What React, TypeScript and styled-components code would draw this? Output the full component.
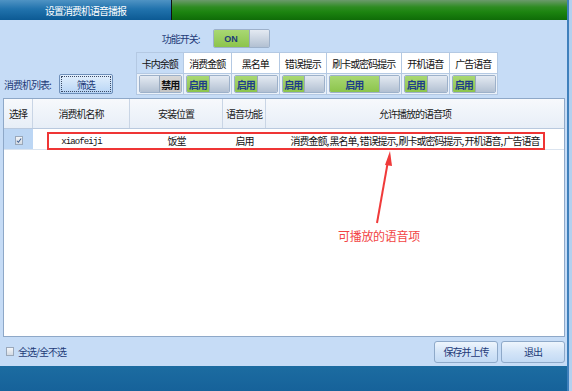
import React from "react";
import styled, { createGlobalStyle } from "styled-components";

const GlobalStyle = createGlobalStyle`
  html, body { margin: 0; padding: 0; }
  body {
    font-family: "Noto Sans CJK SC", "Noto Sans", sans-serif;
    font-size: 10px;
    letter-spacing: -1px;
    background: #ffffff;
  }
  * { box-sizing: border-box; }
`;

const Window = styled.div`
  width: 572px;
  height: 391px;
  display: flex;
  overflow: hidden;
`;

const Main = styled.div`
  width: 567px;
  display: flex;
  flex-direction: column;
  background: #c6dcf6;
`;

const EdgeStrip = styled.div`
  width: 5px;
  background: #b4d0ef;
  border-left: 2px solid #3f80bc;
`;

const TitleBar = styled.div`
  height: 20px;
  display: flex;
`;

const TitleLeft = styled.div`
  width: 172px;
  background: linear-gradient(#4f93c4 0%, #2173ad 45%, #0c5a94 100%);
  color: #ffffff;
  font-size: 10px;
  display: flex;
  align-items: center;
  justify-content: center;
  border-right: 1px solid #101010;
`;

const TitleRight = styled.div`
  flex: 1;
  background: linear-gradient(#6c9a6c 0%, #2f8c22 35%, #1c8410 60%, #0f6c08 100%);
`;

const ControlArea = styled.div`
  height: 78px;
  display: flex;
  align-items: flex-end;
  padding: 9px 0 3px 4px;
`;

const FilterGroup = styled.div`
  display: flex;
  align-items: center;
  gap: 8px;
  margin-bottom: 1px;
`;

const NavyLabel = styled.span`
  color: #1e3a78;
  font-size: 10px;
  white-space: nowrap;
`;

const FilterButton = styled.button`
  width: 54px;
  height: 20px;
  padding: 1px;
  border: 1px solid #6f90ba;
  border-radius: 2px;
  background: linear-gradient(#e2effd, #b8d5f5);
  font-family: inherit;
  font-size: 10px;
  letter-spacing: -1px;
  color: #1e3a78;
  display: flex;
`;

const FocusRing = styled.span`
  flex: 1;
  border: 1px dotted #3a4a66;
  display: flex;
  align-items: center;
  justify-content: center;
`;

const VoicePanel = styled.div`
  margin-left: 23px;
  display: flex;
  flex-direction: column;
  gap: 4px;
`;

const FuncRow = styled.div`
  height: 19px;
  display: flex;
  align-items: center;
  gap: 13px;
  margin-left: 26px;
`;

const Switch = styled.div<{ $w: number }>`
  width: ${(p) => p.$w}px;
  height: 100%;
  display: flex;
  border: 1px solid #9db1ca;
  border-radius: 2px;
  overflow: hidden;
`;

const SwitchLabel = styled.span<{ $on: boolean }>`
  flex: 1;
  display: flex;
  align-items: center;
  justify-content: center;
  font-weight: 700;
  font-size: 10px;
  color: ${(p) => (p.$on ? "#1d3c8a" : "#111111")};
  background: ${(p) =>
    p.$on
      ? "linear-gradient(#a9d873, #8cc44c)"
      : "linear-gradient(#d8d8d8, #c4c4c4)"};
`;

const OnText = styled.span`
  font-family: "Liberation Sans", Arial, sans-serif;
  font-weight: 700;
  font-size: 9px;
  letter-spacing: 0;
  color: #1d3c7a;
`;

const Knob = styled.span<{ $side: "left" | "right" }>`
  width: 20px;
  background: linear-gradient(#e4eaf2, #b2c0d2);
  ${(p) =>
    p.$side === "right"
      ? "border-left: 1px solid #98a9be;"
      : "border-right: 1px solid #98a9be;"}
`;

const VoiceGrid = styled.div`
  display: grid;
  grid-template-columns: 46px 47px 47px 46px 74px 47px 47px;
  grid-template-rows: 20px 20px;
  gap: 1px;
  padding: 1px;
  background: #b4c9e3;
  width: 362px;
`;

const VoiceHead = styled.div<{ $selected?: boolean }>`
  background: ${(p) => (p.$selected ? "#c6dcf6" : "#ffffff")};
  color: #111111;
  font-size: 10px;
  display: flex;
  align-items: center;
  justify-content: center;
  white-space: nowrap;
`;

const VoiceCell = styled.div`
  background: #eaf1f9;
  padding: 1px 1px 1px 2px;
  display: flex;
`;

const Table = styled.div`
  height: 239px;
  margin: 0 2px 0 3px;
  border: 1px solid #8ea8c8;
  background: #ffffff;
  position: relative;
`;

const Row = styled.div<{ $head?: boolean }>`
  display: grid;
  grid-template-columns: 29px 97px 93px 43px 1fr;
  height: ${(p) => (p.$head ? 30 : 21)}px;
  border-bottom: 1px solid ${(p) => (p.$head ? "#b9c9de" : "#dbe4ef")};
  background: ${(p) => (p.$head ? "linear-gradient(#f7f9fc, #e7eef7)" : "#ffffff")};
`;

const HeadCell = styled.div`
  border-right: 1px solid #c9d5e5;
  display: flex;
  align-items: center;
  justify-content: center;
  color: #1a1a1a;
  font-size: 10px;
  white-space: nowrap;
  &:last-child { border-right: none; }
`;

const Cell = styled.div<{ $select?: boolean; $mono?: boolean }>`
  display: flex;
  align-items: center;
  justify-content: center;
  padding-top: ${(p) => (p.$mono ? "5px" : "2px")};
  background: ${(p) => (p.$select ? "#bcd6f4" : "transparent")};
  color: #111111;
  white-space: nowrap;
  font-size: ${(p) => (p.$mono ? "9px" : "10px")};
  letter-spacing: ${(p) => (p.$mono ? "-0.9px" : "-1px")};
  font-family: ${(p) =>
    p.$mono ? '"Liberation Mono", "DejaVu Sans Mono", monospace' : "inherit"};
`;

const Highlight = styled.div`
  position: absolute;
  left: 43px;
  top: 33px;
  width: 498px;
  height: 18px;
  border: 2px solid #ef3535;
  pointer-events: none;
`;

const ArrowLayer = styled.svg`
  position: absolute;
  left: 0;
  top: 0;
  pointer-events: none;
`;

const NoteText = styled.div`
  position: absolute;
  left: 334px;
  top: 129px;
  color: #f24444;
  font-size: 12px;
  letter-spacing: -0.3px;
  line-height: 16px;
  white-space: nowrap;
`;

const BottomArea = styled.div`
  height: 29px;
  display: flex;
  align-items: center;
  justify-content: space-between;
  padding: 0 2px 0 6px;
`;

const SelectAll = styled.label`
  display: flex;
  align-items: center;
  gap: 4px;
  color: #1e3a78;
  font-size: 10px;
`;

const BoxIcon = styled.span`
  width: 8px;
  height: 9px;
  border: 1px solid #9aa8ba;
  background: linear-gradient(#f4f6f9, #d3dae3);
  display: inline-flex;
  align-items: center;
  justify-content: center;
`;

const ButtonRow = styled.div`
  display: flex;
  gap: 3px;
`;

const ActionButton = styled.button`
  width: 64px;
  height: 22px;
  border: 1px solid #8ea9c9;
  border-radius: 3px;
  background: linear-gradient(#eef5fd, #d4e5f8 50%, #c3daf4);
  color: #1e3a78;
  font-family: inherit;
  font-size: 10px;
  letter-spacing: -1px;
  padding: 0;
`;

const BottomBar = styled.div`
  height: 25px;
  background: linear-gradient(#1c6ca1, #16629a);
`;

const voiceItems = [
  { name: "卡内余额", on: false, w: 46 },
  { name: "消费金额", on: true, w: 47 },
  { name: "黑名单", on: true, w: 47 },
  { name: "错误提示", on: true, w: 46 },
  { name: "刷卡或密码提示", on: true, w: 74 },
  { name: "开机语音", on: true, w: 47 },
  { name: "广告语音", on: true, w: 47 },
];

const Check = () => (
  <svg width="7" height="7" viewBox="0 0 7 7">
    <path d="M1 3.8 L2.8 5.6 L6 1.2" stroke="#3a5b8f" strokeWidth="1.2" fill="none" />
  </svg>
);

export default function App() {
  return (
    <>
      <GlobalStyle />
      <Window>
        <Main>
          <TitleBar>
            <TitleLeft>设置消费机语音播报</TitleLeft>
            <TitleRight />
          </TitleBar>

          <ControlArea>
            <FilterGroup>
              <NavyLabel>消费机列表:</NavyLabel>
              <FilterButton>
                <FocusRing>筛选</FocusRing>
              </FilterButton>
            </FilterGroup>
            <VoicePanel>
              <FuncRow>
                <NavyLabel>功能开关:</NavyLabel>
                <Switch $w={57}>
                  <SwitchLabel $on>
                    <OnText>ON</OnText>
                  </SwitchLabel>
                  <Knob $side="right" />
                </Switch>
              </FuncRow>
              <VoiceGrid>
                {voiceItems.map((v, i) => (
                  <VoiceHead key={v.name} $selected={i === 0}>
                    {v.name}
                  </VoiceHead>
                ))}
                {voiceItems.map((v) => (
                  <VoiceCell key={v.name + "-t"}>
                    <Switch $w={v.w - 3}>
                      {v.on ? (
                        <>
                          <SwitchLabel $on>启用</SwitchLabel>
                          <Knob $side="right" />
                        </>
                      ) : (
                        <>
                          <Knob $side="left" />
                          <SwitchLabel $on={false}>禁用</SwitchLabel>
                        </>
                      )}
                    </Switch>
                  </VoiceCell>
                ))}
              </VoiceGrid>
            </VoicePanel>
          </ControlArea>

          <Table>
            <Row $head>
              <HeadCell>选择</HeadCell>
              <HeadCell>消费机名称</HeadCell>
              <HeadCell>安装位置</HeadCell>
              <HeadCell>语音功能</HeadCell>
              <HeadCell>允许播放的语音项</HeadCell>
            </Row>
            <Row>
              <Cell $select>
                <BoxIcon>
                  <Check />
                </BoxIcon>
              </Cell>
              <Cell $mono>xiaofeiji</Cell>
              <Cell>饭堂</Cell>
              <Cell>启用</Cell>
              <Cell>消费金额, 黑名单, 错误提示, 刷卡或密码提示, 开机语音, 广告语音</Cell>
            </Row>
            <Highlight />
            <ArrowLayer width="560" height="237" viewBox="0 0 560 237">
              <line x1="373" y1="124" x2="384" y2="62" stroke="#f03a3a" strokeWidth="2" />
              <polygon points="386,52 381,66 388,67" fill="#f03a3a" />
            </ArrowLayer>
            <NoteText>可播放的语音项</NoteText>
          </Table>

          <BottomArea>
            <SelectAll>
              <BoxIcon />
              全选/全不选
            </SelectAll>
            <ButtonRow>
              <ActionButton>保存并上传</ActionButton>
              <ActionButton>退出</ActionButton>
            </ButtonRow>
          </BottomArea>

          <BottomBar />
        </Main>
        <EdgeStrip />
      </Window>
    </>
  );
}
